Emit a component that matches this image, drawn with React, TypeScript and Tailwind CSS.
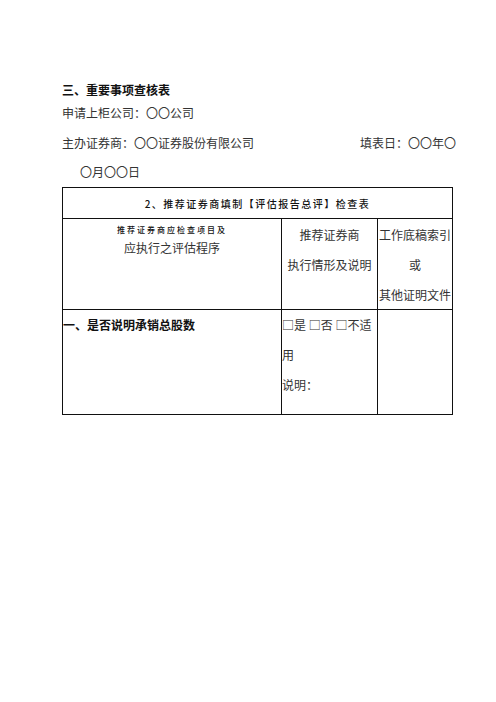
import React from "react";

const font = { fontFamily: '"Noto Sans CJK SC", "Noto Sans", sans-serif' };

function Box() {
  return <span>□</span>;
}

export default function App() {
  return (
    <div className="w-[496px] h-[702px] bg-white text-[#333]" style={font}>
      <div className="pl-[62px] pt-[80px]">
        <div className="text-[12px] leading-[20px] font-bold text-[#111]">三、重要事项查核表</div>
        <div className="text-[12px] leading-[26px]">申请上柜公司：〇〇公司</div>
        <div className="flex text-[12px] leading-[34px]">
          <span>主办证券商：〇〇证券股份有限公司</span>
          <span className="ml-[106px]">填表日：〇〇年〇</span>
        </div>
        <div className="text-[12px] leading-[24px] pl-[18px]">〇月〇〇日</div>

        <div className="mt-[3px] w-[391px] border border-[#111]">
          <div className="h-[31px] flex items-center justify-center border-b border-[#111] text-[10px] tracking-[1.5px] font-medium text-[#111]">
            2、推荐证券商填制【评估报告总评】检查表
          </div>
          <div className="flex h-[91px] border-b border-[#111]">
            <div className="w-[219px] border-r border-[#111] flex flex-col items-center pt-[4px]">
              <div className="text-[8px] leading-[14px] tracking-[2px] font-medium text-[#111]">推荐证券商应检查项目及</div>
              <div className="text-[12px] leading-[22px]">应执行之评估程序</div>
            </div>
            <div className="w-[96px] border-r border-[#111] flex flex-col items-center pt-[1px] text-[12px] leading-[30px]">
              <div>推荐证券商</div>
              <div>执行情形及说明</div>
            </div>
            <div className="flex-1 flex flex-col items-center pt-[1px] text-[12px] leading-[30px] whitespace-nowrap">
              <div>工作底稿索引</div>
              <div>或</div>
              <div>其他证明文件</div>
            </div>
          </div>
          <div className="flex h-[104px]">
            <div className="w-[219px] border-r border-[#111] text-[12px] leading-[30px] font-bold text-[#111]">
              一、是否说明承销总股数
            </div>
            <div className="w-[96px] border-r border-[#111] text-[12px] leading-[30px] whitespace-nowrap">
              <div>
                <Box />是 <Box />否 <Box />不适
              </div>
              <div>用</div>
              <div>说明：</div>
            </div>
            <div className="flex-1" />
          </div>
        </div>
      </div>
    </div>
  );
}
